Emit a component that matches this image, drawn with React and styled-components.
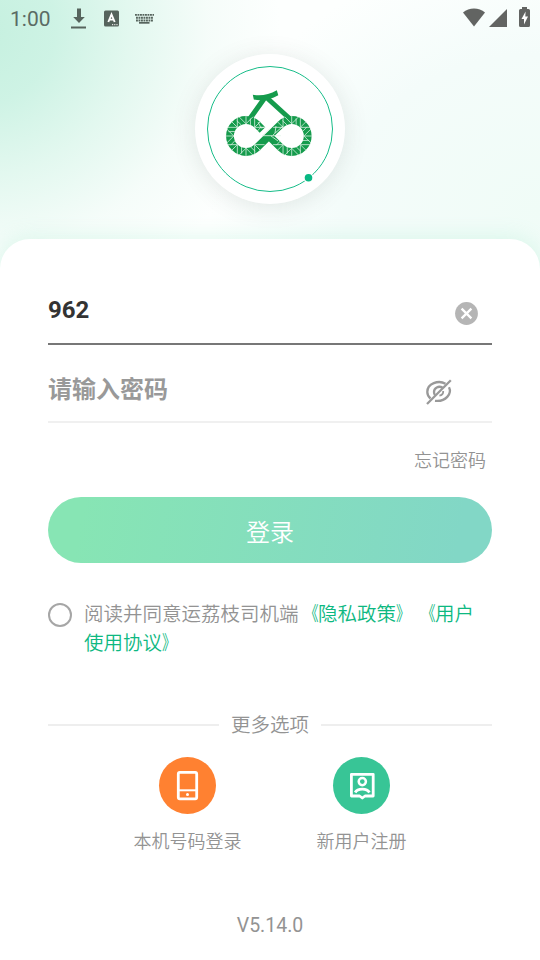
import React from "react";
import styled, { createGlobalStyle } from "styled-components";

const GlobalStyles = createGlobalStyle`
  * {
    box-sizing: border-box;
  }
  body {
    margin: 0;
    background-color: white;
    font-family: Roboto, "Noto Sans CJK SC", sans-serif;
    color: #939393;
  }
  button,
  input {
    font-family: inherit;
    border: none;
    outline: none;
    padding: 0;
    background: transparent;
  }
  svg {
    display: block;
    flex-shrink: 0;
  }
`;

const LoginPageStyles = styled.div`
  width: 540px;
  height: 960px;
  overflow: hidden;
  display: flex;
  flex-direction: column;
  background: radial-gradient(
      ellipse 300px 290px at -20px 30px,
      #c5f0df 0%,
      rgba(203, 242, 227, 0.94) 25%,
      rgba(219, 246, 235, 0.78) 50%,
      rgba(238, 250, 245, 0.5) 76%,
      rgba(255, 255, 255, 0) 100%
    ),
    radial-gradient(
      ellipse 330px 260px at 540px 210px,
      #f0fcf7 0%,
      #f4fcfa 60%,
      #fdfffe 100%
    );
`;

const StatusBar = styled.div`
  height: 54px;
  padding: 6px 9px 0 10px;
  display: flex;
  justify-content: space-between;
  align-items: flex-start;
  .time {
    width: 60px;
    font-size: 21px;
    line-height: 26px;
    color: #5b6b64;
  }
`;

const StatusGroup = styled.div`
  display: flex;
  align-items: center;
  height: ${(props) => props.$height}px;
`;

const LogoBadge = styled.div`
  width: 150px;
  height: 150px;
  margin: 0 auto 35px;
  flex-shrink: 0;
  border-radius: 100rem;
  background-color: white;
  box-shadow: 0 3px 24px rgba(60, 80, 72, 0.13);
`;

const Card = styled.div`
  flex: 1;
  padding: 40px 48px 0;
  border-radius: 30px 30px 0 0;
  background-color: white;
  box-shadow: 0 0 22px rgba(120, 225, 185, 0.24);
`;

const Field = styled.div`
  height: ${(props) => props.$height}px;
  padding-right: ${(props) => props.$right}px;
  padding-bottom: ${(props) => props.$bottom}px;
  border-bottom: 2px solid ${(props) => (props.$active ? "#777" : "#f0f0f0")};
  display: flex;
  align-items: flex-end;
  justify-content: space-between;
`;

const Input = styled.input`
  width: 300px;
  height: 36px;
  margin-bottom: ${(props) => props.$lift}px;
  font-size: 24px;
  font-weight: 700;
  color: #333;
  &::placeholder {
    color: #999;
    opacity: 1;
  }
`;

const ForgotLink = styled.div`
  height: 74px;
  padding: 24px 6px 0 0;
  text-align: right;
  font-size: 18px;
  font-weight: 350;
  line-height: 27px;
`;

const LoginButton = styled.button`
  display: block;
  width: 100%;
  height: 66px;
  padding-top: 1px;
  border-radius: 33px;
  background: linear-gradient(100deg, #87e5b4 8%, #82d7c6 92%);
  color: white;
  font-size: 24px;
  font-weight: 350;
`;

const Agreement = styled.div`
  height: 147px;
  padding-top: 37px;
  display: flex;
  align-items: flex-start;
  gap: 12px;
  .check {
    width: 24px;
    height: 24px;
    margin-top: 3px;
    flex-shrink: 0;
    border: 2px solid #a6a6a6;
    border-radius: 100rem;
  }
  p {
    margin: 0;
    width: 400px;
    font-size: 19.5px;
    font-weight: 350;
    line-height: 29px;
  }
  span {
    color: #0db881;
  }
`;

const Bracket = styled.span`
  display: inline-block;
  width: 19.5px;
  transform: scaleX(0.72);
  transform-origin: ${(props) => props.$side} center;
`;

const Divider = styled.div`
  height: 32px;
  display: flex;
  align-items: center;
  gap: 12px;
  font-size: 19.5px;
  font-weight: 350;
  line-height: 34px;
  &::before,
  &::after {
    content: "";
    flex: 1;
    height: 2px;
    margin-bottom: 2px;
    background-color: #eee;
  }
`;

const Options = styled.div`
  display: flex;
  padding: 0 43px 0 52px;
  margin-top: 15px;
  justify-content: center;
`;

const Option = styled.div`
  width: 174px;
  flex-shrink: 0;
  display: flex;
  flex-direction: column;
  align-items: center;
  gap: 14px;
  font-size: 18px;
  font-weight: 350;
  line-height: 27px;
  .icon {
    width: 57px;
    height: 57px;
    border-radius: 100rem;
    background-color: ${(props) => props.$color};
  }
`;

const Version = styled.div`
  margin-top: 57px;
  text-align: center;
  font-size: 19.5px;
  line-height: 28px;
`;

// spokes and slanted cuts that split a ring into facets
const facets = (cx, cy, from, to) => {
  const point = (r, deg) => {
    const a = (deg * Math.PI) / 180;
    return `${(cx + r * Math.cos(a)).toFixed(2)} ${(cy + r * Math.sin(a)).toFixed(2)}`;
  };
  let d = "";
  for (let deg = from; deg <= to; deg += 45) {
    d += `M${point(12, deg)}L${point(20.5, deg)}`;
    d += `M${point(12.2, deg)}L${point(20.5, deg + 20)}`;
    d += `M${point(12.2, deg)}L${point(20.5, deg - 20)}`;
    d += `M${point(12, deg + 22)}L${point(18, deg + 14)}`;
  }
  return d;
};

const LogoMark = () => (
  <svg width="150" height="150" viewBox="0 0 150 150" fill="none">
    <circle cx="75" cy="75" r="62.5" stroke="#17bd89" strokeWidth="1" />
    <circle cx="113.5" cy="123.7" r="5" fill="white" />
    <circle cx="113.5" cy="123.7" r="3.8" fill="#08b883" />
    <g stroke="#159b4c">
      <path d="M55 64.5L70 43.5M71 43L94 64" strokeWidth="5" />
      <path
        d="M67.5 76L62.3 70.7A16 16 0 1 0 62.3 93.3L85.4 70.7A16 16 0 1 1 85.4 93.3L75 83"
        strokeWidth="7.8"
      />
    </g>
    <path
      d="M57.8 40.8C66 42 74 41 81.8 36.3L83.3 41.3C75 46 66 47 58.8 45.5Z"
      fill="#159b4c"
    />
    <path
      d={facets(51, 82, 45, 315) + facets(96.7, 82, -135, 135)}
      stroke="#d5efdf"
      strokeWidth="0.8"
    />
    <path
      d="M67 82L74.5 75M68 81.7H86M78 81L88 72M76 82L83 87M63 68L66 74L70 73M81 72L80 79"
      stroke="#e3f5e9"
      strokeWidth="0.8"
    />
  </svg>
);

const StatusIcons = () => (
  <StatusGroup $height={26}>
    <div className="time">1:00</div>
    <svg width="90" height="26" viewBox="70 6 90 26" fill="#56645d">
      <path d="M77 8.5h4v8.5h3.8L79 23l-5.8-6H77zM71 26.500h15v2H71z" />
      <rect x="104" y="10.5" width="15" height="16" rx="1.5" />
      <path
        d="M108.3 22L111.5 14.5L114.7 22M109.3 19.6h4.4"
        fill="none"
        stroke="white"
        strokeWidth="1.9"
      />
      <path d="M112 24.7h1.2M114.2 24.7h1.2M116.4 24.7h1.2" stroke="white" />
      <path
        d="M135 14.9h19M136 17.7h17M136 20.5h17"
        stroke="#56645d"
        strokeWidth="1.9"
        strokeDasharray="1.9 0.6"
      />
      <path d="M139 22h10.500v1.700H139z" />
    </svg>
  </StatusGroup>
);

const PhoneStatus = () => (
  <StatusGroup $height={24}>
    <svg width="68" height="24" viewBox="463 6 68 24" fill="#626462">
      <path d="M463 12.600C469 7 479 7 485 12.600L474 26.500z" />
      <path d="M489 27L507 9v18z" />
      <path d="M522 7h5v2h1.500q1.500 0 1.500 1.500v15q0 1.500-1.500 1.500h-8q-1.500 0-1.500-1.500v-15q0-1.500 1.500-1.500H522z" />
      <path d="M525.600 11.500L521.500 19h2.500v5.500L528 16.500h-2.700z" fill="white" />
    </svg>
  </StatusGroup>
);

const ClearIcon = () => (
  <svg width="24" height="24" viewBox="0 0 24 24">
    <circle cx="11.5" cy="12.5" r="11.4" fill="#b5b5b5" />
    <path d="M6.6 7.6l9.8 9.8M16.4 7.6l-9.8 9.8" stroke="white" strokeWidth="2.3" />
  </svg>
);

const EyeOffIcon = () => (
  <svg width="28" height="28" viewBox="0 0 28 28" fill="none" stroke="#999" strokeWidth="2.3">
    <path d="M20.500 5.700C13.500 1.800 2.300 5.400 2.300 14c0 2.600 1.300 4.900 3.200 6.500" />
    <path d="M24 9.200c3.200 6.300-3.200 15-14 13.600" />
    <path d="M17.700 9.700C13.500 7.400 9 9.900 9 14c0 1 .2 2.100 1 3" />
    <path d="M18.200 13c.2 2.500-1.500 4.300-3.800 4.600" strokeWidth="1.8" />
    <path d="M2 26L25.800 2.200" />
  </svg>
);

const PhoneIcon = () => (
  <svg width="57" height="57" viewBox="0 0 57 57" fill="none" stroke="white" strokeWidth="2.8">
    <rect x="19.3" y="15.4" width="18.4" height="26.4" rx="1.5" />
    <path d="M20 33.300h17" strokeWidth="2" />
    <circle cx="28.5" cy="37.5" r="1.5" fill="white" stroke="none" />
  </svg>
);

const RegisterIcon = () => (
  <svg width="57" height="57" viewBox="0 0 57 57" fill="none" stroke="white" strokeWidth="2.8">
    <path d="M18.400 17.300h21.800v21.700h-8.200L29.300 41l-2.700-2h-8.200z" strokeLinejoin="round" />
    <circle cx="29.3" cy="24.6" r="3.6" strokeWidth="2.5" />
    <path d="M22.200 35.500C24.500 31 34 31 36.400 35.500" />
  </svg>
);

const PolicyLink = ({ children }) => (
  <span>
    <Bracket $side="right">《</Bracket>
    {children}
    <Bracket $side="left">》</Bracket>
  </span>
);

const App = () => {
  return (
    <LoginPageStyles>
      <GlobalStyles />
      <StatusBar>
        <StatusIcons />
        <PhoneStatus />
      </StatusBar>
      <LogoBadge>
        <LogoMark />
      </LogoBadge>
      <Card>
        <Field $active $height={66} $right={13} $bottom={18}>
          <Input defaultValue="962" $lift={-3} />
          <ClearIcon />
        </Field>
        <Field $height={78} $right={39} $bottom={15}>
          <Input type="password" placeholder="请输入密码" $lift={-2} />
          <EyeOffIcon />
        </Field>
        <ForgotLink>忘记密码</ForgotLink>
        <LoginButton>登录</LoginButton>
        <Agreement>
          <div className="check" />
          <p>
            阅读并同意运荔枝司机端
            <PolicyLink>隐私政策</PolicyLink>
            <PolicyLink>用户使用协议</PolicyLink>
          </p>
        </Agreement>
        <Divider>更多选项</Divider>
        <Options>
          <Option $color="#ff8131">
            <div className="icon">
              <PhoneIcon />
            </div>
            本机号码登录
          </Option>
          <Option $color="#38c596">
            <div className="icon">
              <RegisterIcon />
            </div>
            新用户注册
          </Option>
        </Options>
        <Version>V5.14.0</Version>
      </Card>
    </LoginPageStyles>
  );
};

export default App;
